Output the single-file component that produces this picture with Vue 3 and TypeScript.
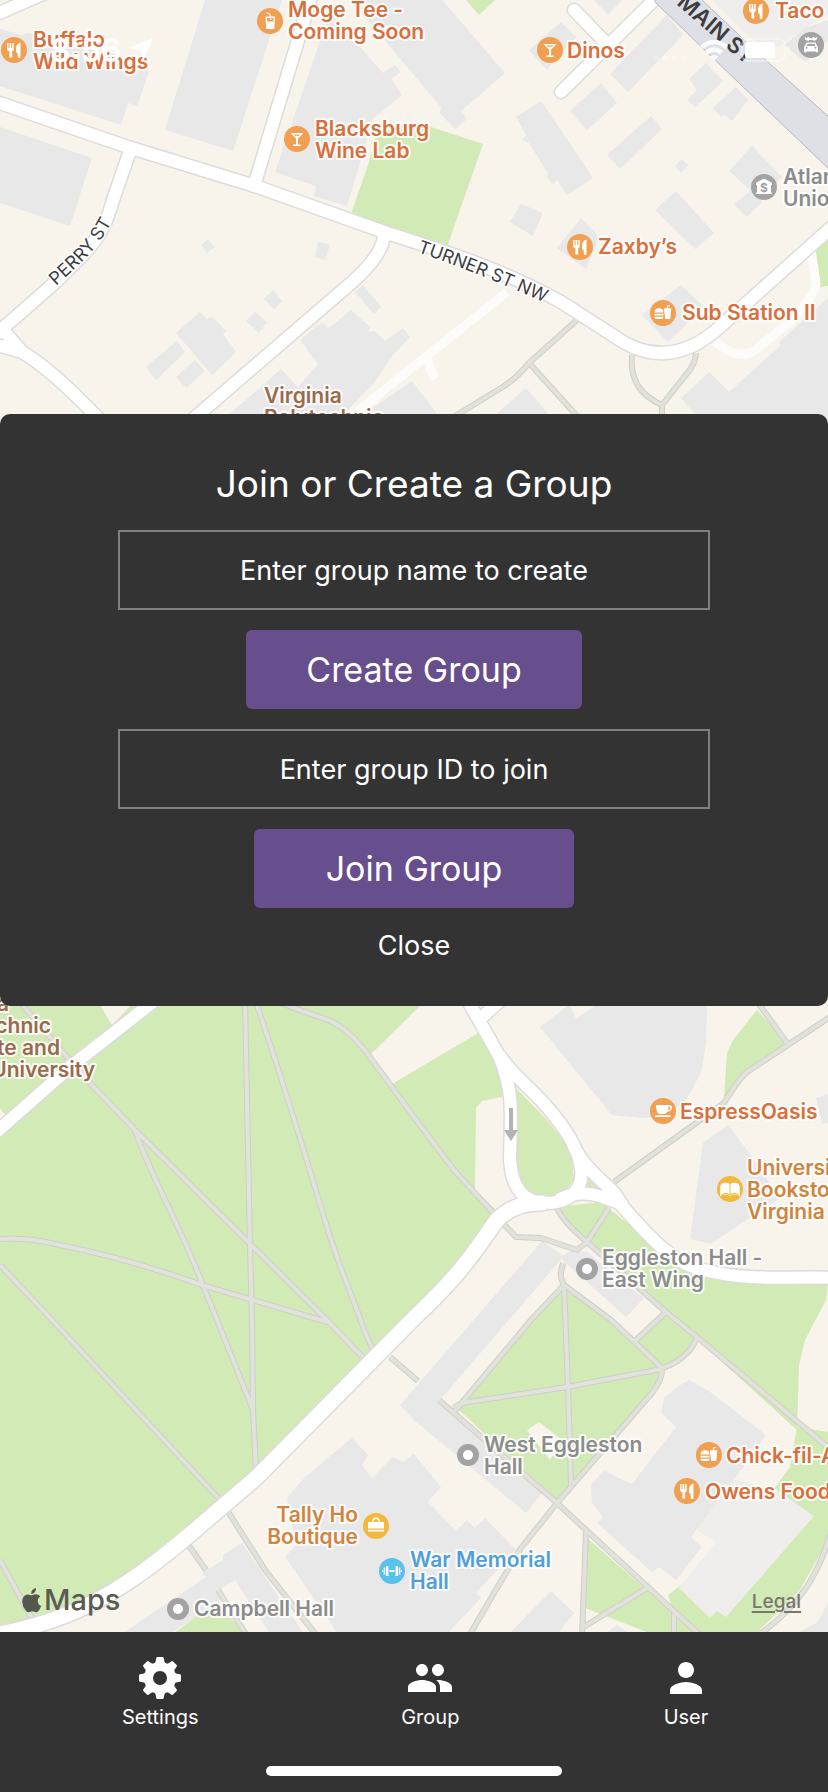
<script setup lang="ts">
import { ref } from 'vue'

type Tone = 'food' | 'shop' | 'place' | 'campus' | 'sport'
type Glyph = 'fork' | 'cocktail' | 'drink' | 'burger' | 'cup' | 'book' | 'bag' | 'gym' | 'bank' | 'car' | 'dot'

interface Label {
  x: number
  y: number
  lines: string[]
  tone: Tone
  end?: boolean
}

interface Pin {
  x: number
  y: number
  glyph: Glyph
  tone: Tone
}

const groupName = ref('')
const groupId = ref('')
const open = ref(true)

const parks: string[] = [
  '466,0 479,15 495,0',
  '368,165 380,124 431,127 483,144 446,250 350,217',
  '814,245 828,235 828,286 820,287',
  '0,1000 455,1000 480,1033 500,1070 508,1100 525,1200 500,1215 480,1260 414,1320 300,1430 200,1520 100,1598 0,1634',
  '516,1088 547,1120 571,1150 574,1180 561,1197 527,1193 514,1173',
  '584,1170 614,1196 584,1190',
  '557,1207 601,1202 664,1253 704,1275 828,1283 826,1300 805,1340 799,1365 797,1430 668,1313 587,1243',
  '563,1285 457,1408 557,1502 658,1385 661,1370 601,1315',
  '667,1312 697,1338 681,1360 662,1367 636,1343',
  '797,1427 828,1432 828,1540 800,1590 770,1620 755,1634 700,1634 672,1608 668,1595 684,1583 760,1500 777,1485 790,1467',
  '587,1538 697,1634 652,1634 585,1608',
  '757,1010 787,1043 744,1072 724,1097 727,1053 733,1040',
  '218,1600 243,1634 173,1634',
]

const clearings: string[] = [
  '97,1000 112,1025 136,1000',
  '0,1108 7,1117 0,1124',
  '426,1000 370,1055 392,1084 480,1032 458,1000',
  '476,1108 482,1101 505,1096 508,1150 510,1180 525,1200 498,1212 475,1190',
  '539,1422 527,1430 550,1460 562,1440',
]

const buildings: string[] = [
  '0,29 22,35 28,33 147,62 149,72 137,106 128,103 121,125 0,86',
  '205,0 282,0 233,151 165,130',
  '275,172 316,186 314,196 347,206 352,190 373,118 402,95 391,79 401,72 395,65 383,73 345,30 330,12',
  '350,0 370,23 414,75 441,107 440,113 455,129 467,119 461,111 505,73 442,0',
  '0,127 92,158 70,226 0,203',
  '208,239 215,247 207,253 201,245',
  '318,242 330,245 325,260 315,257',
  '273,290 282,301 274,310 264,299',
  '255,312 267,322 259,333 246,321',
  '200,312 207,319 213,317 226,331 223,334 236,352 212,375 176,333',
  '177,341 185,352 156,380 146,367',
  '195,360 205,371 186,388 176,377',
  '363,285 381,307 374,314 355,292',
  '322,322 329,328 351,310 370,327 368,332 375,331 385,341 403,328 410,337 391,357 374,383 340,418 225,418 232,412 281,369 298,387 318,364 300,340',
  '358,418 412,381 440,418',
  '526,388 550,416 494,416',
  '709,372 729,392 781,345 779,342 828,298 828,420 700,420 681,398',
  '561,22 576,37 547,70 529,50',
  '594,0 608,14 622,0',
  '667,15 683,35 628,92 610,74',
  '601,83 617,103 587,130 570,111',
  '541,101 593,178 567,195 557,180 553,184 547,178 548,173 529,143 522,140 526,135 516,117',
  '651,116 662,129 620,169 607,155',
  '706,63 723,81 695,107 687,100 697,90 689,79',
  '736,87 748,100 732,121 724,114 721,117 713,108',
  '682,159 688,165 681,173 675,166',
  '752,146 782,177 761,200 729,171',
  '676,191 714,233 695,249 655,210',
  '752,190 762,202 747,217 734,204',
  '521,204 543,213 533,236 510,222',
  '581,218 599,237 586,269 557,248',
  '681,285 704,307 668,342 642,315',
  '784,45 805,28 828,20 828,40 805,62',
  '540,1027 570,1004 576,1019 600,1002 707,1002 706,1043 701,1073 686,1100 664,1117 641,1118 612,1115',
  '728,1125 703,1143 690,1239 711,1244 751,1217 780,1198 747,1150',
  '816,1098 828,1094 828,1123 822,1124',
  '542,1241 564,1256 440,1400 483,1440 542,1493 526,1513 414,1420 400,1405',
  '560,1257 572,1250 587,1252 644,1298 626,1317 565,1262',
  '352,1438 368,1455 362,1465 372,1478 393,1457 402,1462 414,1454 441,1487 428,1502 456,1531 467,1520 475,1528 485,1518 516,1550 476,1593 481,1598 447,1634 338,1634 313,1597 285,1557 296,1545 287,1498 305,1477 330,1456',
  '242,1543 304,1634 270,1634 235,1580 222,1588 220,1600 173,1632 122,1634 206,1577 202,1573 223,1560 223,1555',
  '689,1380 709,1391 766,1435 734,1480 691,1537 702,1547 676,1580 659,1567 652,1572 597,1523 603,1517 592,1503 591,1485 604,1470 617,1477 632,1484 676,1427 661,1413 664,1398 677,1387',
  '551,1591 574,1613 557,1634 509,1634 537,1605',
  '617,1625 630,1634 604,1634',
  '828,1602 818,1622 795,1634 828,1634',
]

const paleBuildings: string[] = [
  '712,0 828,0 828,14 790,38 770,52 750,38',
  '734,1480 777,1490 814,1516 726,1617 717,1611 710,1618 679,1588 716,1542 692,1527',
]

const footpaths: string[] = [
  'M18 1000 67 1057 90 1083 135 1130 325 1318 370 1365',
  'M135 1130C150 1175 180 1225 202 1283L217 1320 253 1410',
  'M245 1000 250 1247 252 1320 253 1410 256 1470',
  'M255 1000C280 1070 305 1155 327 1227 340 1270 358 1310 364 1330L376 1356',
  'M275 1000C300 1012 320 1016 333 1022 350 1032 358 1042 367 1053L414 1117 454 1170 497 1217 516 1237 541 1238 577 1250 587 1242',
  'M0 1239Q25 1237 60 1245C110 1255 160 1270 202 1285L327 1322',
  'M0 1265 52 1320 220 1500',
  'M227 1510 265 1570 317 1636',
  'M0 1560 36 1626',
  'M187 1543 206 1570',
  'M218 1590 247 1636',
  'M390 1357 418 1381',
  'M557 1208Q563 1222 587 1242L666 1312 697 1337 830 1449',
  'M609 1208 587 1242',
  'M563 1263C560 1275 560 1278 564 1285L611 1320 662 1368',
  'M564 1285 531 1320 454 1412',
  'M564 1285 568 1387 571 1485',
  'M454 1408Q460 1402 475 1401L567 1387 640 1373Q684 1368 697 1338',
  'M666 1312 634 1342',
  'M662 1370Q662 1380 652 1393L557 1503 521 1548 494 1593 469 1636',
  'M439 1400 557 1503 586 1530 701 1636',
  'M586 1532 582 1636',
  'M647 1588 582 1628',
  'M674 1613V1636',
  'M830 1535C818 1575 800 1605 760 1634',
  'M830 1017 747 1072Q738 1080 724 1103L614 1182',
  'M756 1000 787 1043',
  'M577 320 529 363Q515 380 501 388L455 416',
  'M529 363 577 416',
  'M632 355Q630 372 638 386 646 398 662 405V418',
  'M696 353Q696 364 685 376L662 405',
]

const serviceRoads: string[] = [
  'M507 292 414 366 352 416',
  'M427 360 435 379',
  'M811 250Q815 275 816 284 812 300 790 322L755 350Q736 363 712 338',
]

const roads: string[] = [
  'M-10 17 52 -10',
  'M312 -6 254 186',
  'M-6 101 128 147 255 186 387 233C440 250 500 268 561 302L614 336Q664 372 714 332L834 225',
  'M131 148 113 200C105 230 98 243 50 287L-6 336',
  'M3 330 22 352Q50 368 98 418',
  'M-6 344 22 352',
  'M384 236Q382 258 343 290L192 420',
  'M654 0 561 92',
  'M574 10 607 44',
  'M-6 1134 70 1067 158 998',
  'M466 998C482 1025 492 1043 500 1058 514 1095 511 1110 510 1160 512 1190 525 1203 546 1203 572 1203 584 1187 581 1168 578 1147 565 1128 547 1107 530 1087 512 1075 500 1056',
  'M480 1019 503 998',
  'M573 1144Q580 1162 605 1184 618 1195 622 1206C650 1238 675 1265 704 1270 750 1282 790 1276 834 1278',
  'M560 1199Q578 1190 600 1196L622 1204',
]

const avenue =
  'M542 1203Q515 1202 497 1220C475 1250 465 1270 414 1318L333 1400 257 1477 187 1537C150 1568 110 1598 66 1615Q30 1629 -6 1635'

const labels: Label[] = [
  { x: 33, y: 47, lines: ['Buffalo', 'Wild Wings'], tone: 'food' },
  { x: 288, y: 17, lines: ['Moge Tee -', 'Coming Soon'], tone: 'food' },
  { x: 315, y: 136, lines: ['Blacksburg', 'Wine Lab'], tone: 'food' },
  { x: 567, y: 58, lines: ['Dinos'], tone: 'food' },
  { x: 775, y: 18, lines: ['Taco'], tone: 'food' },
  { x: 783, y: 184, lines: ['Atlantic', 'Union'], tone: 'place' },
  { x: 598, y: 254, lines: ['Zaxby’s'], tone: 'food' },
  { x: 682, y: 320, lines: ['Sub Station II'], tone: 'food' },
  { x: 264, y: 403, lines: ['Virginia', 'Polytechnic'], tone: 'campus' },
  { x: 9, y: 1011, lines: ['Virginia'], tone: 'campus', end: true },
  { x: 51, y: 1033, lines: ['Polytechnic'], tone: 'campus', end: true },
  { x: 60, y: 1055, lines: ['Institute and'], tone: 'campus', end: true },
  { x: 95, y: 1077, lines: ['State University'], tone: 'campus', end: true },
  { x: 680, y: 1119, lines: ['EspressOasis'], tone: 'food' },
  { x: 747, y: 1175, lines: ['University', 'Bookstore', 'Virginia'], tone: 'shop' },
  { x: 602, y: 1265, lines: ['Eggleston Hall -', 'East Wing'], tone: 'place' },
  { x: 484, y: 1452, lines: ['West Eggleston', 'Hall'], tone: 'place' },
  { x: 726, y: 1463, lines: ['Chick-fil-A'], tone: 'food' },
  { x: 705, y: 1499, lines: ['Owens Food'], tone: 'food' },
  { x: 358, y: 1522, lines: ['Tally Ho', 'Boutique'], tone: 'shop', end: true },
  { x: 410, y: 1567, lines: ['War Memorial', 'Hall'], tone: 'sport' },
  { x: 194, y: 1616, lines: ['Campbell Hall'], tone: 'place' },
]

const pins: Pin[] = [
  { x: 14, y: 50, glyph: 'fork', tone: 'food' },
  { x: 270, y: 21, glyph: 'drink', tone: 'food' },
  { x: 297, y: 139, glyph: 'cocktail', tone: 'food' },
  { x: 550, y: 50, glyph: 'cocktail', tone: 'food' },
  { x: 756, y: 11, glyph: 'fork', tone: 'food' },
  { x: 811, y: 45, glyph: 'car', tone: 'place' },
  { x: 764, y: 187, glyph: 'bank', tone: 'place' },
  { x: 580, y: 247, glyph: 'fork', tone: 'food' },
  { x: 663, y: 313, glyph: 'burger', tone: 'food' },
  { x: 663, y: 1111, glyph: 'cup', tone: 'food' },
  { x: 730, y: 1189, glyph: 'book', tone: 'shop' },
  { x: 587, y: 1269, glyph: 'dot', tone: 'place' },
  { x: 468, y: 1455, glyph: 'dot', tone: 'place' },
  { x: 709, y: 1455, glyph: 'burger', tone: 'food' },
  { x: 687, y: 1491, glyph: 'fork', tone: 'food' },
  { x: 376, y: 1526, glyph: 'bag', tone: 'shop' },
  { x: 392, y: 1571, glyph: 'gym', tone: 'sport' },
  { x: 178, y: 1609, glyph: 'dot', tone: 'place' },
]

const glyphs: Record<Exclude<Glyph, 'dot'>, string> = {
  fork: 'M-7-7h1.500v5h1v-5h1.800v5h1v-5h1.500v6q0 2-1.800 2.500l.4 5.500q-1.700 1.500-3.200 0l.4-5.500Q-7 1-7-1zM6.500-7.500v15q-1.500.8-2.600 0L3.500 2.500H2V-2q.5-4.500 4.500-5.500z',
  cocktail: 'M-6.500-6h13L1-.3V5.500h2.700V7h-7.400V5.500H-1V-.3zM-3.400-4.600l1.300 1.400h4.200l1.300-1.400z',
  drink: 'M-4.500-4.500H-.3L-.8-6.800-4-7.800-3.600-8.800.2-7.600.9-4.500H5L4.300 8H-3.800zM-3-3l.2 3.500H3.400L3.600-3H1.200v2H.1v-2z',
  burger:
    'M-8.500-.5q0-4.200 4.500-4.200T.5-.5zM-8.500.8H.5v1.700h-9zM-8.500 3.700H.5q0 2.300-1.700 2.300h-5.600q-1.700 0-1.700-2.300zM.8-4.700h3l.5-2.900 2.300-.6.3 1-1.600.5-.3 2H8.300L7.300 6H2.200z',
  cup: 'M-7-6H5q4-.5 4 2.600Q9 .5 4.500.8 3.300 2.800 1.800 3h-5.600Q-7 1.500-7-6zM5.500-4.500q0 2-.4 3.700 2.400-.3 2.400-2.300 0-1.400-2-1.400zM-8 4.300H7.500V6H-8z',
  book: 'M-9-5q5-2.500 8.500 0V5q-3.500-2-8.500.3zM9-5Q4-7.500.5-5V5Q4 3 9 5.300zM-10-3.500V7Q-4 4.500-1 6.500H1Q4 4.500 10 7V-3.500H9.300V6Q4 4 .5 6h-1Q-4 4-9.300 6v-9.500z',
  bag: 'M-4-4q0-4.500 4-4.500T4-4h4v6.500H-8V-4zM-2.500-4h5q0-3-2.500-3t-2.500 3zM-8 3.800H8V5.500H-8z',
  gym: 'M-2.500-1h5v2h-5zM-6-5h2.400V5H-6zM3.600-5H6V5H3.600zM-8.300-3.500h1.500v7h-1.500zM6.800-3.500h1.500v7H6.800zM-9.800-1h1v2h-1zM8.800-1h1v2h-1z',
  bank: 'M0-8.500 8-4.300V-2H7V5.500H8V7H-8V5.500h1V-2h-1v-2.300z',
  car: 'M-4.500-2.500h9L6 .8Q7 1.500 7 2.800V6.500q0 1-1.200 1T4.500 6.500h-9q-.2 1-1.300 1T-7 6.500V2.800Q-7 1.500-6 .8zM-3.600-1.300-4.500 1h9l-.9-2.300zM-5.400 2.800a1 1 0 1 0 2 0 1 1 0 1 0-2 0zM3.400 2.800a1 1 0 1 0 2 0 1 1 0 1 0-2 0zM-6-8.500l1 1.500 1.500-.2L-3-8.500q1.500.7 1.500 1.800h3Q1.500-7.800 3-8.500l.5 1.300 1.500.2 1-1.500q1 3-2 4Q2-4 1.500-5h-3Q-2-4-4-4.500q-3-1-2-4z',
}
</script>

<template>
  <div class="app">
    <main class="map">
      <svg class="canvas" viewBox="0 0 828 1632" preserveAspectRatio="xMidYMin slice" role="img" aria-label="Map">
        <defs>
          <path id="perry" d="M56 286 84 260Q102 242 116 214" />
          <path id="turner" d="M417 252Q485 275 556 308" />
          <path id="main" d="M676 4 776 91" />
        </defs>

        <polygon v-for="p in parks" :key="p" :points="p" class="park" />
        <polygon v-for="p in clearings" :key="p" :points="p" class="clearing" />
        <polygon v-for="p in paleBuildings" :key="p" :points="p" class="pale" />
        <polygon v-for="p in buildings" :key="p" :points="p" class="building" />

        <path v-for="d in footpaths" :key="d" :d="d" class="foot-edge" />
        <path v-for="d in footpaths" :key="d" :d="d" class="foot" />
        <path v-for="d in serviceRoads" :key="d" :d="d" class="service" />
        <path :d="avenue" class="road-edge wide" />
        <path v-for="d in roads" :key="d" :d="d" class="road-edge" />
        <path v-for="d in roads" :key="d" :d="d" class="road" />
        <path :d="avenue" class="road wide" />
        <path class="highway" d="M654-1 656 3 740 84 830 170V118L760 55 701-1z" />
        <path class="arrow" d="M509 1108h4v22h5l-7 11-7-11h5z" />

        <text class="street"><textPath href="#perry">PERRY ST</textPath></text>
        <text class="street"><textPath href="#turner">TURNER ST NW</textPath></text>
        <text class="street major"><textPath href="#main">MAIN ST</textPath></text>

        <g v-for="pin in pins" :key="`${pin.x}-${pin.y}`" :transform="`translate(${pin.x} ${pin.y})`">
          <template v-if="pin.glyph === 'dot'">
            <circle r="11" class="pin place" />
            <circle r="5" class="glyph" />
          </template>
          <template v-else>
            <circle r="13" :class="['pin', pin.tone]" />
            <path :d="glyphs[pin.glyph]" class="glyph" />
            <text v-if="pin.glyph === 'bank'" y="5" class="dollar">$</text>
          </template>
        </g>

        <text
          v-for="label in labels"
          :key="`${label.x}-${label.y}`"
          :class="['label', label.tone, { end: label.end }]"
          :y="label.y"
        >
          <tspan v-for="(line, i) in label.lines" :key="line" :x="label.x" :dy="i ? 22 : 0">{{ line }}</tspan>
        </text>
      </svg>

      <footer class="credits">
        <span class="brand">
          <svg class="apple" viewBox="0 0 21 26" aria-hidden="true">
            <path
              d="M15 1q.3 2.400-1.200 4.200T10.200 7Q10 4.800 11.400 3.100T15 1zM10.700 8.300q.9 0 2.300-.7 4-1.200 6.300 1.900-2.800 1.800-2.500 4.900.3 3.200 3.400 4.500-1 2.800-2.800 5-1.500 1.700-3.200 1.100-3-1.400-5.600 0-1.900.7-3.500-1.100Q1.500 19.800 1.200 15.500 1 10.800 3.900 8.600q2.200-1.700 4.700-.7 1.400.5 2.100.4z"
            />
          </svg>
          <span>Maps</span>
        </span>
        <a class="legal" href="#legal">Legal</a>
      </footer>
    </main>

    <header class="status">
      <span class="clock">
        <span>8:56</span>
        <svg class="locate" viewBox="0 0 24 24" aria-hidden="true"><path d="M24 0 14 24 12 12 0 10z" /></svg>
      </span>
      <span class="signals">
        <svg class="cell" viewBox="0 0 34 22" aria-hidden="true">
          <path d="M1 17h5v4H1zM10 17h5v4h-5zM19 17h5v4h-5zM28 17h5v4h-5z" />
        </svg>
        <svg class="wifi" viewBox="0 0 30 22" aria-hidden="true">
          <path d="M1 6.500Q15-5 29 6.500L26 10Q15 .5 4 10zM6 12q9-7.500 18 0l-3.200 3.400q-5.800-4.800-11.600 0zM11 17.500q4-3 8 0l-4 4.500z" />
        </svg>
        <svg class="battery" viewBox="0 0 50 24" aria-hidden="true">
          <rect class="shell" x="1" y="1" width="43" height="22" rx="6" />
          <rect x="4" y="4" width="30" height="16" rx="2" />
          <path class="tip" d="M46 8q3 1 3 4t-3 4z" />
        </svg>
      </span>
    </header>

    <div v-if="open" class="overlay">
      <section class="dialog" role="dialog" aria-labelledby="dialog-title">
        <h1 id="dialog-title" class="title">Join or Create a Group</h1>
        <input v-model="groupName" class="field" type="text" aria-label="Group name" placeholder="Enter group name to create" />
        <button class="action" type="button">Create Group</button>
        <input v-model="groupId" class="field" type="text" aria-label="Group ID" placeholder="Enter group ID to join" />
        <button class="action" type="button">Join Group</button>
        <button class="close" type="button" @click="open = false">Close</button>
      </section>
    </div>

    <nav class="tabs">
      <div class="tab-row">
        <button class="tab" type="button">
          <svg class="tab-icon" viewBox="-24 -24 48 48" aria-hidden="true">
            <circle r="16" />
            <path
              v-for="n in 8"
              :key="n"
              d="M-6.500-13-4.500-16-3.700-20Q-3.500-21-2.500-21h5Q3.500-21 3.700-20L4.500-16 6.500-13z"
              :transform="`rotate(${n * 45})`"
            />
            <circle class="hole" r="7" />
          </svg>
          <span>Settings</span>
        </button>
        <button class="tab" type="button">
          <svg class="tab-icon" viewBox="0 0 24 24" aria-hidden="true">
            <path
              d="M16 11c1.660 0 2.990-1.340 2.990-3S17.660 5 16 5c-1.660 0-3 1.340-3 3s1.340 3 3 3zm-8 0c1.660 0 2.990-1.340 2.990-3S9.660 5 8 5C6.340 5 5 6.340 5 8s1.340 3 3 3zm0 2c-2.330 0-7 1.170-7 3.500V19h14v-2.500c0-2.330-4.670-3.500-7-3.500zm8 0c-.29 0-.62.020-.97.050 1.160.84 1.970 1.970 1.970 3.450V19h6v-2.500c0-2.330-4.670-3.500-7-3.500z"
            />
          </svg>
          <span>Group</span>
        </button>
        <button class="tab" type="button">
          <svg class="tab-icon" viewBox="0 0 24 24" aria-hidden="true">
            <path d="M12 12c2.210 0 4-1.790 4-4s-1.790-4-4-4-4 1.790-4 4 1.790 4 4 4zm0 2c-2.670 0-8 1.340-8 4v2h16v-2c0-2.660-5.330-4-8-4z" />
          </svg>
          <span>User</span>
        </button>
      </div>
      <div class="home"></div>
    </nav>
  </div>
</template>

<style>
body {
  margin: 0;
  background: #333333;
}
</style>

<style scoped>
.app {
  position: relative;
  display: flex;
  flex-direction: column;
  min-height: 100vh;
  overflow: hidden;
  font-family: Inter, "Liberation Sans", sans-serif;
  color: #ffffff;
}

.map {
  position: relative;
  flex: 1;
  overflow: hidden;
  background: #f8f4eb;
}

.canvas {
  position: absolute;
  inset: 0;
  width: 100%;
  height: 100%;
}

.park { fill: #d1eab6; }
.clearing { fill: #f8f4eb; }
.pale { fill: #efeeec; }
.building { fill: #e8e8e8; }

.foot-edge,
.foot,
.service,
.road-edge,
.road {
  fill: none;
  stroke-linejoin: round;
}

.foot-edge { stroke: #cfcfc8; stroke-width: 6; }
.foot { stroke: #e1e2dc; stroke-width: 4; }
.service { stroke: #fdfcfa; stroke-width: 9; }
.road-edge { stroke: #dddcda; stroke-width: 15; stroke-linecap: round; }
.road { stroke: #ffffff; stroke-width: 12; stroke-linecap: round; }
.road-edge.wide { stroke-width: 18; }
.road.wide { stroke-width: 15; }
.highway { fill: #dfe0e5; stroke: #b9b9bd; stroke-width: 1; }
.arrow { fill: #b3b3b3; }

.street {
  font-size: 18px;
  fill: #3d3d3f;
  stroke: #ffffff;
  stroke-width: 3px;
  stroke-linejoin: round;
  paint-order: stroke;
}

.street.major {
  font-size: 22px;
  font-weight: 600;
  stroke: #dfe0e5;
}

.label {
  font-size: 21px;
  font-weight: 600;
  stroke: rgba(255, 255, 255, 0.85);
  stroke-width: 4px;
  stroke-linejoin: round;
  paint-order: stroke;
}

.label.end { text-anchor: end; }
.label.food { fill: #d8703d; }
.label.shop { fill: #d0853e; }
.label.place { fill: #8c8c8c; }
.label.campus { fill: #9b6a4c; }
.label.sport { fill: #509fd9; }

.pin.food { fill: #f0a050; }
.pin.shop { fill: #f2b93d; }
.pin.place { fill: #a3a3a3; }
.pin.sport { fill: #58c1ec; }
.glyph { fill: #ffffff; fill-rule: evenodd; }

.dollar {
  font-size: 12px;
  font-weight: 700;
  fill: #a3a3a3;
  text-anchor: middle;
}

.credits {
  position: absolute;
  left: 0;
  right: 0;
  bottom: 12px;
  display: flex;
  justify-content: space-between;
  align-items: center;
  padding: 0 27px 0 21px;
}

.brand {
  display: flex;
  align-items: center;
  gap: 2px;
  font-size: 29px;
  line-height: 40px;
  font-weight: 500;
  color: #5a5b52;
}

.apple {
  width: 21px;
  height: 26px;
  fill: #55594b;
}

.legal {
  padding-top: 4px;
  font-size: 19px;
  line-height: 24px;
  font-weight: 500;
  color: #77776f;
  text-underline-offset: 3px;
  text-decoration-thickness: 2px;
}

.status {
  position: absolute;
  top: 0;
  left: 0;
  right: 0;
  display: flex;
  justify-content: space-between;
  align-items: center;
  height: 100px;
  padding: 0 37px 0 50px;
}

.clock {
  display: flex;
  align-items: center;
  gap: 8px;
  font-size: 32px;
  font-weight: 600;
}

.locate {
  width: 24px;
  height: 24px;
  fill: #ffffff;
}

.signals {
  display: flex;
  align-items: center;
  gap: 12px;
  fill: #ffffff;
}

.cell {
  width: 34px;
  height: 22px;
  opacity: 0.25;
}

.wifi {
  width: 30px;
  height: 22px;
  opacity: 0.9;
}

.battery {
  width: 50px;
  height: 24px;
}

.shell {
  fill: none;
  stroke: #ffffff;
  stroke-width: 2;
  opacity: 0.35;
}

.tip { opacity: 0.4; }

.overlay {
  position: absolute;
  inset: 0;
  display: flex;
  align-items: center;
  padding-bottom: 372px;
}

.dialog {
  box-sizing: border-box;
  display: flex;
  flex-direction: column;
  align-items: center;
  gap: 20px;
  width: 100%;
  padding: 44px 118px 42px;
  border-radius: 10px;
  background: #333333;
}

.title {
  margin: 0;
  font-size: 37px;
  line-height: 52px;
  font-weight: 400;
}

.field {
  box-sizing: border-box;
  width: 100%;
  height: 80px;
  border: 2px solid #808080;
  border-radius: 0;
  padding: 0 16px;
  background: transparent;
  color: #ffffff;
  font: inherit;
  font-size: 27px;
  text-align: center;
}

.field::placeholder {
  color: #ffffff;
  opacity: 1;
}

.action {
  min-width: 320px;
  height: 79px;
  border: 0;
  border-radius: 6px;
  padding: 0 60px;
  background: #674e8d;
  color: #ffffff;
  font: inherit;
  font-size: 34px;
}

.close {
  border: 0;
  padding: 0 16px;
  background: none;
  color: #ffffff;
  font: inherit;
  font-size: 27px;
  line-height: 36px;
}

.tabs {
  display: flex;
  flex-direction: column;
  align-items: center;
  gap: 37px;
  padding: 22px 0 16px;
  background: #333333;
}

.tab-row {
  box-sizing: border-box;
  display: flex;
  justify-content: space-between;
  width: 100%;
  padding: 0 118px 0 122px;
}

.tab {
  display: flex;
  flex-direction: column;
  align-items: center;
  gap: 3px;
  border: 0;
  padding: 0;
  background: none;
  color: #ffffff;
  font: inherit;
  font-size: 20px;
  line-height: 24px;
}

.tab-icon {
  width: 48px;
  height: 48px;
  fill: #ffffff;
}

.hole { fill: #333333; }

.home {
  width: 296px;
  height: 10px;
  border-radius: 5px;
  background: #ffffff;
}
</style>
